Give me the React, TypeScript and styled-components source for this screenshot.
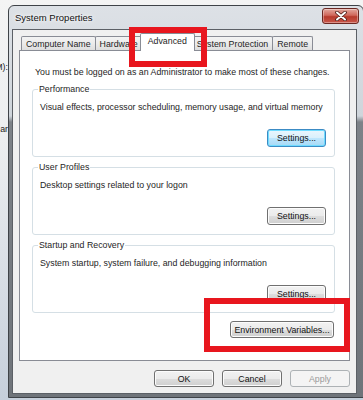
import React from 'react';
import styled, { createGlobalStyle } from 'styled-components';

const GlobalStyle = createGlobalStyle`
  * { box-sizing: border-box; }
  html, body { margin: 0; padding: 0; }
  body {
    font-family: "Liberation Sans", Arial, sans-serif;
    color: #1e1e1e;
  }
`;

const Screen = styled.div`
  position: relative;
  display: flex;
  width: 363px;
  height: 400px;
  overflow: hidden;
  background: linear-gradient(180deg, #f4f4f4 0%, #eceef0 35%, #c6cfdb 100%);
`;

// sliver of the window that sits behind the dialog
const BackWindow = styled.div`
  flex: none;
  width: 8px;
  display: flex;
  flex-direction: column;
  padding-top: 61px;
  font-size: 8.8px;
  line-height: 12px;
  color: #222;
`;

const BackLine = styled.div<{ $gap?: number }>`
  display: flex;
  justify-content: flex-end;
  white-space: nowrap;
  margin-top: ${p => p.$gap || 0}px;
`;

const Window = styled.div`
  flex: none;
  width: 356px;
  height: 393px;
  margin-top: 5px;
  display: flex;
  flex-direction: column;
  padding: 0 6px 3px 3px;
  border: 1px solid #3f4348;
  border-radius: 6px 6px 0 0;
  background: linear-gradient(
    180deg,
    #dde1e6 0px,
    #cfd5db 110px,
    #7d8288 116px,
    #6f747a 100%
  );
`;

const TitleBar = styled.div`
  display: flex;
  align-items: center;
  justify-content: space-between;
  height: 23px;
  padding-left: 3px;
`;

const Title = styled.span`
  font-size: 9.5px;
  color: #111;
  text-shadow: 0 0 6px #fff, 0 0 3px #fff;
`;

const CloseButton = styled.div`
  align-self: flex-start;
  display: flex;
  align-items: center;
  justify-content: center;
  width: 37px;
  height: 16px;
  margin-top: 2px;
  margin-right: -2px;
  border: 1px solid #6b2822;
  border-radius: 3px;
  background: linear-gradient(180deg, #e3a89e 0%, #d0675b 45%, #b73a2c 55%, #c9574a 100%);
  box-shadow: inset 0 0 0 1px rgba(255, 255, 255, 0.35);
`;

const Client = styled.div`
  flex: 1;
  display: flex;
  flex-direction: column;
  padding: 3px 6px 0;
  border: 1px solid #5c6066;
  background: #f0f0f0;
`;

const TabStrip = styled.div`
  position: relative;
  z-index: 1;
  display: flex;
  align-items: flex-end;
  height: 17px;
  padding-left: 2px;
`;

const Tab = styled.div<{ $active?: boolean }>`
  position: relative;
  height: ${p => (p.$active ? 18 : 14)}px;
  margin: ${p => (p.$active ? '0 -2px -1px -3px' : '0 0 0 -1px')};
  padding: 0 ${p => (p.$active ? 7 : 4)}px ${p => (p.$active ? 3 : 0)}px;
  display: flex;
  align-items: center;
  border: 1px solid #898c95;
  border-bottom: none;
  border-radius: 2px 2px 0 0;
  font-size: 8.8px;
  white-space: nowrap;
  z-index: ${p => (p.$active ? 2 : 1)};
  background: ${p =>
    p.$active ? '#fff' : 'linear-gradient(180deg, #f3f3f3 0%, #ebebeb 50%, #dedede 100%)'};

  &:first-child {
    margin-left: 0;
  }
`;

const Panel = styled.div`
  height: 311px;
  display: flex;
  flex-direction: column;
  gap: 4px;
  padding: 15px 14px 0 12px;
  border: 1px solid #898c95;
  background: #fff;
`;

const Note = styled.div`
  padding-left: 3px;
  margin-bottom: 1px;
  font-size: 8.8px;
  line-height: 12px;
  white-space: nowrap;
`;

const Group = styled.fieldset`
  margin: 0;
  min-width: 0;
  display: flex;
  flex-direction: column;
  padding: 0 8px 9px 7px;
  border: 1px solid #d5dfe5;
  border-radius: 3px;
`;

const GroupTitle = styled.legend`
  margin-left: -2px;
  padding: 0 1px;
  font-size: 8.8px;
  line-height: 12px;
`;

const GroupText = styled.div`
  margin-top: 6px;
  font-size: 8.8px;
  line-height: 12px;
  white-space: nowrap;
`;

const ButtonRow = styled.div<{ $top: number; $right?: number }>`
  display: flex;
  justify-content: flex-end;
  margin-top: ${p => p.$top}px;
  padding-right: ${p => p.$right || 0}px;
`;

const Button = styled.button<{ $width: number; $height: number; $focused?: boolean }>`
  width: ${p => p.$width}px;
  height: ${p => p.$height}px;
  padding: 0;
  font-family: inherit;
  font-size: 8.8px;
  white-space: nowrap;
  color: #111;
  border: 1px solid ${p => (p.$focused ? '#3c8bc4' : '#707070')};
  border-radius: 3px;
  background: ${p =>
    p.$focused
      ? 'linear-gradient(180deg, #eaf6fd 0%, #d9f0fc 50%, #bee6fd 51%, #a7d9f5 100%)'
      : 'linear-gradient(180deg, #f2f2f2 0%, #ebebeb 50%, #dddddd 51%, #cfcfcf 100%)'};
  box-shadow: inset 0 0 0 1px ${p => (p.$focused ? '#6fdcff' : '#fcfcfc')};

  &:disabled {
    color: #9a9a9a;
    border-color: #adb2b5;
    background: #f4f4f4;
    box-shadow: none;
  }
`;

const Footer = styled.div`
  display: flex;
  justify-content: flex-end;
  gap: 8px;
  margin-top: 9px;
`;

// red annotation rectangles drawn over the screenshot
const Marker = styled.div<{ $x: number; $y: number; $w: number; $h: number }>`
  position: absolute;
  left: ${p => p.$x}px;
  top: ${p => p.$y}px;
  width: ${p => p.$w}px;
  height: ${p => p.$h}px;
  border: 6px solid #e8161e;
  z-index: 10;
`;

const tabs = ['Computer Name', 'Hardware', 'Advanced', 'System Protection', 'Remote'];

const groups = [
  { title: 'Performance', text: 'Visual effects, processor scheduling, memory usage, and virtual memory', focused: true },
  { title: 'User Profiles', text: 'Desktop settings related to your logon' },
  { title: 'Startup and Recovery', text: 'System startup, system failure, and debugging information' },
];

function App(): JSX.Element {
  return (
    <Screen>
      <GlobalStyle />
      <BackWindow>
        <BackLine>M):</BackLine>
        <BackLine $gap={50}>ar</BackLine>
      </BackWindow>
      <Window>
        <TitleBar>
          <Title>System Properties</Title>
          <CloseButton>
            <svg width="12" height="10" viewBox="0 0 12 10">
              <path d="M2 1.5 L10 8.5 M10 1.5 L2 8.5" stroke="#4a1c18" strokeWidth="3.6" strokeLinecap="round" />
              <path d="M2 1.5 L10 8.5 M10 1.5 L2 8.5" stroke="#fff" strokeWidth="2" strokeLinecap="round" />
            </svg>
          </CloseButton>
        </TitleBar>
        <Client>
          <TabStrip>
            {tabs.map(t => (
              <Tab key={t} $active={t === 'Advanced'}>
                {t}
              </Tab>
            ))}
          </TabStrip>
          <Panel>
            <Note>You must be logged on as an Administrator to make most of these changes.</Note>
            {groups.map(g => (
              <Group key={g.title}>
                <GroupTitle>{g.title}</GroupTitle>
                <GroupText>{g.text}</GroupText>
                <ButtonRow $top={16}>
                  <Button $width={59} $height={18} $focused={g.focused}>
                    Settings...
                  </Button>
                </ButtonRow>
              </Group>
            ))}
            <ButtonRow $top={4} $right={1}>
              <Button $width={104} $height={17}>
                Environment Variables...
              </Button>
            </ButtonRow>
          </Panel>
          <Footer>
            <Button $width={60} $height={17}>OK</Button>
            <Button $width={60} $height={17}>Cancel</Button>
            <Button $width={60} $height={17} disabled>
              Apply
            </Button>
          </Footer>
        </Client>
      </Window>
      <Marker $x={129} $y={27} $w={78} $h={40} />
      <Marker $x={204} $y={298} $w={146} $h={54} />
    </Screen>
  );
}

export default App;
